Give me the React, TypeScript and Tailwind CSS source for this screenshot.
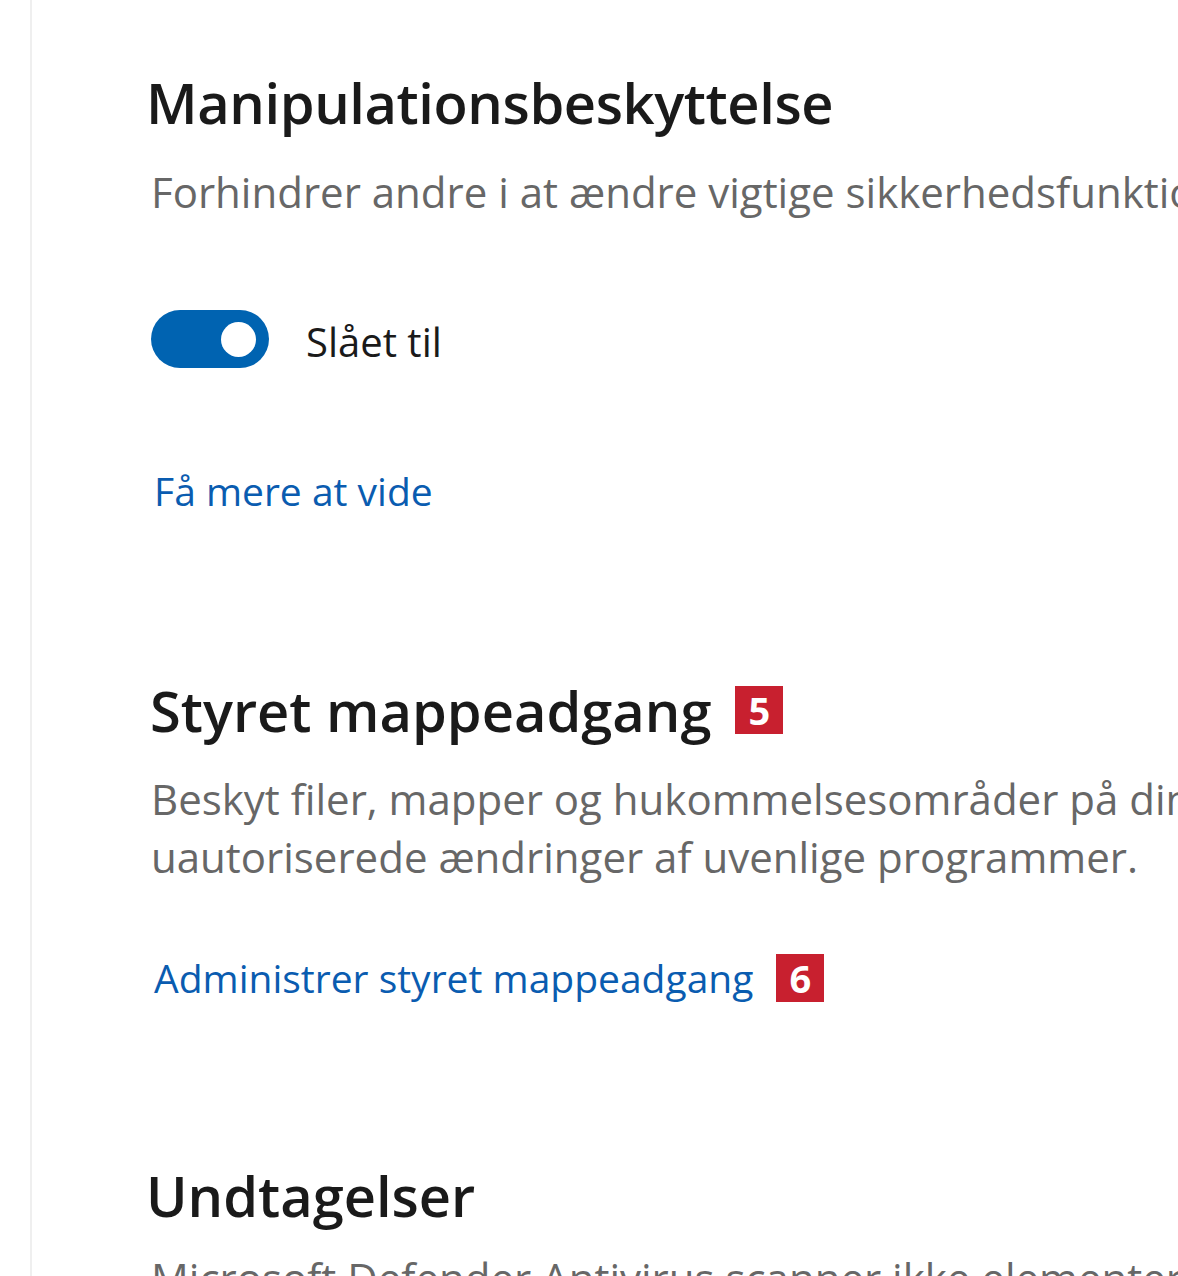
const font = { fontFamily: '"Open Sans", "Noto Sans", sans-serif' };

function Badge({ n }: { n: string }) {
  return (
    <span className="inline-flex items-center justify-center w-[48px] h-[48px] bg-[#c8202f] text-white text-[38px] font-bold leading-none">
      {n}
    </span>
  );
}

export default function App() {
  return (
    <div className="h-[1276px] overflow-hidden bg-white flex" style={font}>
      <div className="w-[32px] shrink-0 border-r-2 border-[#efefef]" />
      <main className="pl-[114px] pt-[66px] whitespace-nowrap">
        <h1 className="text-[56px] leading-[72px] font-semibold text-[#1a1a1a] tracking-[-0.4px]">
          Manipulationsbeskyttelse
        </h1>
        <p className="mt-[25px] pl-[5px] text-[42px] leading-[58px] text-[#676767]">
          Forhindrer andre i at ændre vigtige sikkerhedsfunktioner.
        </p>

        <div className="mt-[89px] flex items-center gap-[37px] h-[58px] pl-[5px]">
          <div className="w-[118px] h-[58px] rounded-full bg-[#0063b1] flex items-center justify-end pr-[13px]">
            <div className="w-[35px] h-[35px] rounded-full bg-white" />
          </div>
          <span className="text-[40px] leading-[58px] text-[#1a1a1a] pt-[6px]">Slået til</span>
        </div>

        <a className="block mt-[94px] pl-[8px] text-[39px] leading-[58px] text-[#0a5cb0]">
          Få mere at vide
        </a>

        <div className="mt-[154px] flex items-center gap-[24px] pl-[4px]">
          <h2 className="text-[56px] leading-[72px] font-semibold text-[#1a1a1a]">
            Styret mappeadgang
          </h2>
          <Badge n="5" />
        </div>
        <p className="mt-[24px] pl-[5px] text-[42px] leading-[58px] text-[#676767]">
          Beskyt filer, mapper og hukommelsesområder på din enhed mod
          <br />
          uautoriserede ændringer af uvenlige programmer.
        </p>

        <div className="mt-[63px] flex items-center gap-[23px] pl-[8px] h-[58px]">
          <a className="text-[39px] leading-[58px] text-[#0a5cb0]">Administrer styret mappeadgang</a>
          <Badge n="6" />
        </div>

        <h2 className="mt-[152px] text-[56px] leading-[72px] font-semibold text-[#1a1a1a]">
          Undtagelser
        </h2>
        <p className="mt-[18px] pl-[5px] text-[42px] leading-[58px] text-[#676767]">
          Microsoft Defender Antivirus scanner ikke elementer, der er udelukket.
        </p>
      </main>
    </div>
  );
}
